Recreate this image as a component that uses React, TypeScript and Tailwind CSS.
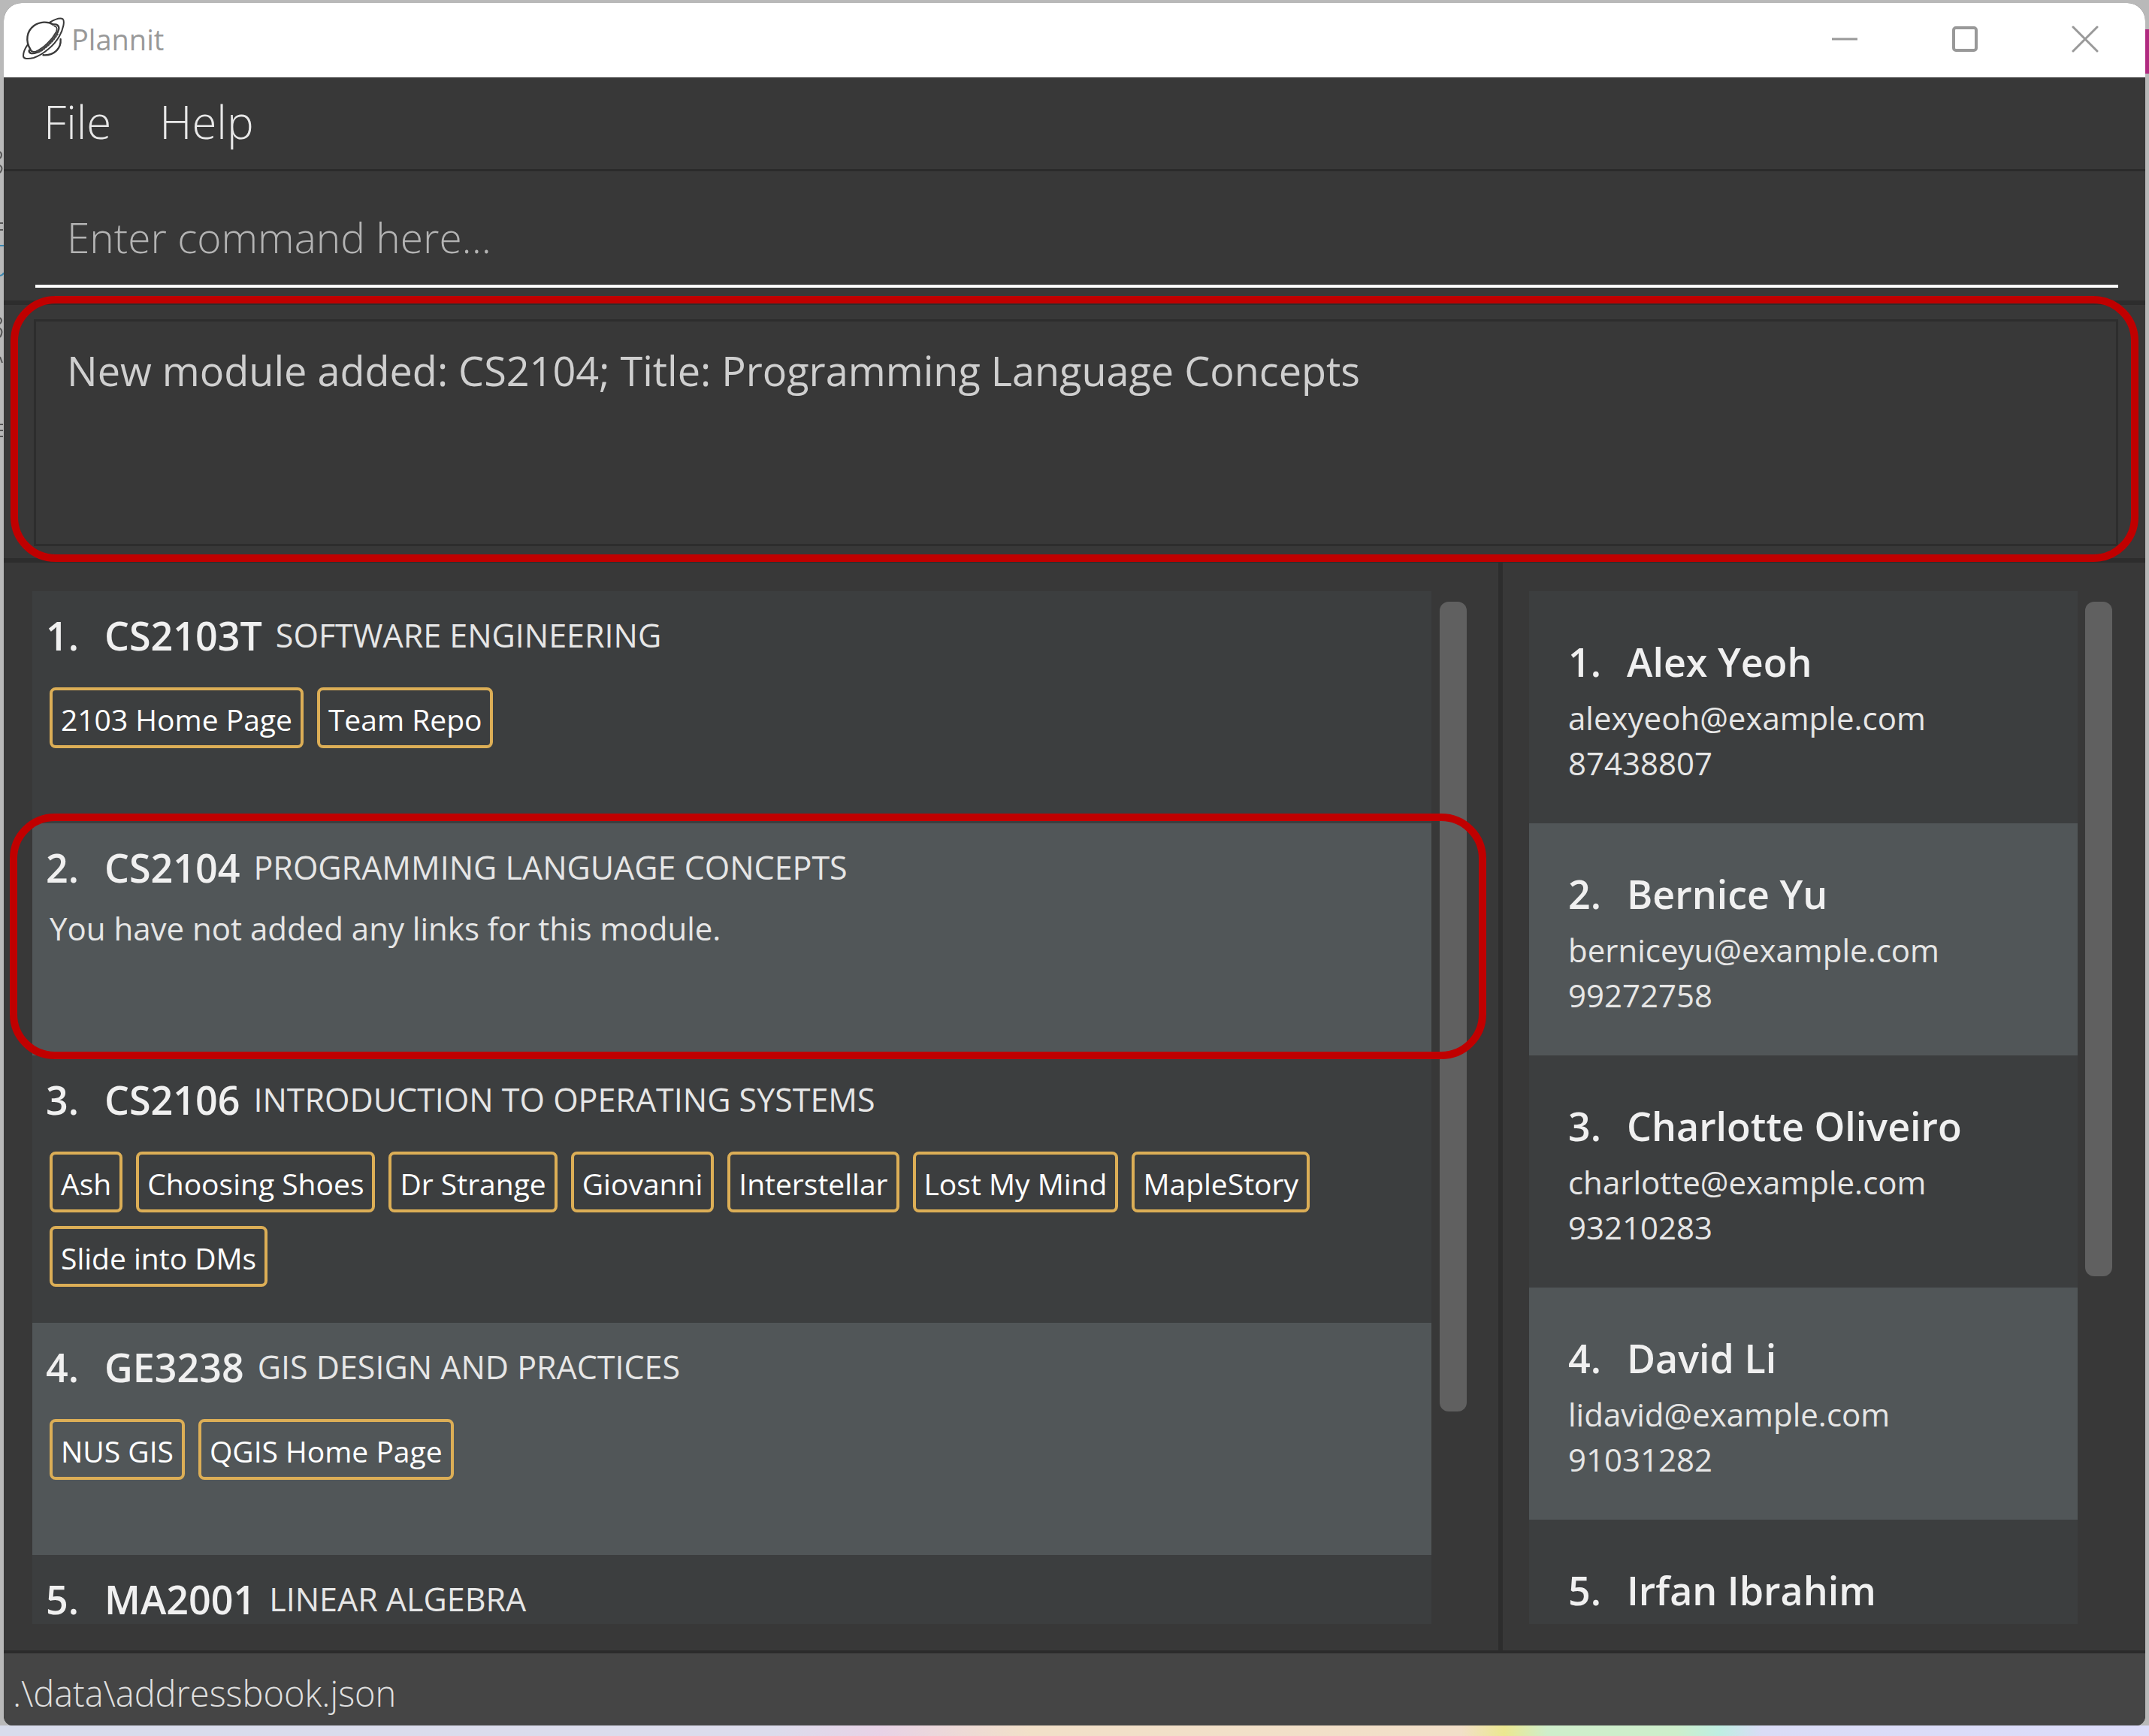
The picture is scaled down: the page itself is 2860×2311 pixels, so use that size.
type Module = { code: string; title: string; links?: string[]; note?: string; highlighted?: boolean };
type Contact = { name: string; email?: string; phone?: string };

const modules: Module[] = [
  { code: "CS2103T", title: "SOFTWARE ENGINEERING", links: ["2103 Home Page", "Team Repo"] },
  {
    code: "CS2104",
    title: "PROGRAMMING LANGUAGE CONCEPTS",
    note: "You have not added any links for this module.",
    highlighted: true,
  },
  {
    code: "CS2106",
    title: "INTRODUCTION TO OPERATING SYSTEMS",
    links: ["Ash", "Choosing Shoes", "Dr Strange", "Giovanni", "Interstellar", "Lost My Mind", "MapleStory", "Slide into DMs"],
  },
  { code: "GE3238", title: "GIS DESIGN AND PRACTICES", links: ["NUS GIS", "QGIS Home Page"] },
  { code: "MA2001", title: "LINEAR ALGEBRA" },
];

const contacts: Contact[] = [
  { name: "Alex Yeoh", email: "alexyeoh@example.com", phone: "87438807" },
  { name: "Bernice Yu", email: "berniceyu@example.com", phone: "99272758" },
  { name: "Charlotte Oliveiro", email: "charlotte@example.com", phone: "93210283" },
  { name: "David Li", email: "lidavid@example.com", phone: "91031282" },
  { name: "Irfan Ibrahim" },
];

function PlanetLogo() {
  return (
    <svg viewBox="24 34 176 176" className="size-[59px]" fill="none" stroke="#3a3a3a" strokeWidth="7" strokeLinecap="round" aria-hidden="true">
      <path d="M62 166 C40 132 46 92 76 70 C98 54 130 52 152 66" />
      <path d="M181 124 C184 158 158 190 112 187" />
      <path d="M136 58 C160 44 180 38 190 44 C198 52 192 84 176 112 C156 148 112 186 74 198 C50 204 32 202 33 190 C33 176 40 160 50 146" strokeWidth="6" />
      <path d="M150 66 C166 62 176 70 174 84 C166 116 122 162 88 176 C70 184 54 182 56 168" />
      <path d="M156 72 C168 74 168 84 164 94 C146 128 112 160 84 172 C72 176 64 174 60 164" strokeWidth="5" />
      <path d="M168 100 C148 134 118 160 88 176" stroke="#4a4a4a" strokeWidth="12" strokeDasharray="9 2" strokeLinecap="butt" />
    </svg>
  );
}

function TitleBar() {
  const button = "flex h-full w-40 items-center justify-center";
  return (
    <header className="flex h-[99px] shrink-0 items-center bg-white pb-1 pl-[23px]">
      <PlanetLogo />
      <h1 className="ml-2 flex-1 text-[38px] leading-[52px] text-[#999999]">Plannit</h1>
      <button className={button} aria-label="Minimize">
        <svg viewBox="0 0 36 36" className="size-9" stroke="#999999" strokeWidth="3" aria-hidden="true">
          <path d="M1 18H35" />
        </svg>
      </button>
      <button className={button} aria-label="Maximize">
        <svg viewBox="0 0 36 36" className="size-9" fill="none" stroke="#999999" strokeWidth="4" aria-hidden="true">
          <rect x="3" y="3" width="30" height="30" rx="3" />
        </svg>
      </button>
      <button className={button} aria-label="Close">
        <svg viewBox="0 0 36 36" className="size-9" stroke="#999999" strokeWidth="3" strokeLinecap="round" aria-hidden="true">
          <path d="M2 2L34 34M34 2L2 34" />
        </svg>
      </button>
    </header>
  );
}

function Heading({ index, children }: { index: number; children: string }) {
  return (
    <h2 className="flex text-[52px] leading-[70px] font-semibold text-[#f0f0f0]">
      <span className="w-[78px]">{index}.</span>
      {children}
    </h2>
  );
}

function Highlight({ className }: { className: string }) {
  return <div className={"pointer-events-none absolute z-10 rounded-[60px] border-[10px] border-[#c00000] " + className} />;
}

function ModuleRow({ module, index }: { module: Module; index: number }) {
  return (
    <li className="relative min-h-[309px] shrink-0 pt-6 pr-8 pb-12 pl-[18px] odd:bg-[#3c3e3f] even:bg-[#515658]">
      <div className="flex items-center gap-[18px]">
        <Heading index={index}>{module.code}</Heading>
        <p className="text-[43px] leading-[60px] text-[#e6e6e6]">{module.title}</p>
      </div>
      {module.links && (
        <div className="mt-[34px] ml-[5px] flex flex-wrap gap-[18px]">
          {module.links.map((link) => (
            <a key={link} href="#" className="flex h-[81px] items-center rounded-lg border-4 border-[#dcae56] px-[11px] pt-1 text-[39px] leading-[54px] text-white">
              {link}
            </a>
          ))}
        </div>
      )}
      {module.note && <p className="mt-4 ml-[5px] text-[42px] leading-[60px] text-[#e6e6e6]">{module.note}</p>}
      {module.highlighted && <Highlight className="-top-[13px] -right-[73px] -bottom-[5px] -left-[30px]" />}
    </li>
  );
}

function ContactRow({ contact, index }: { contact: Contact; index: number }) {
  return (
    <li className="h-[309px] shrink-0 pt-[59px] pl-[52px] odd:bg-[#3c3e3f] even:bg-[#515658]">
      <Heading index={index}>{contact.name}</Heading>
      {contact.email && <p className="mt-2.5 text-[42px] leading-[60px] text-[#e6e6e6]">{contact.email}</p>}
      {contact.phone && <p className="text-[42px] leading-[60px] text-[#e6e6e6]">{contact.phone}</p>}
    </li>
  );
}

function ScrollBar({ thumb }: { thumb: string }) {
  return (
    <div className="w-9 shrink-0 py-3.5">
      <div className={"rounded-xl bg-[#606060] " + thumb} />
    </div>
  );
}

function EdgeMarks({ className }: { className: string }) {
  return (
    <svg viewBox="0 0 5 600" preserveAspectRatio="none" className={"absolute h-[600px] w-[5px] " + className} fill="none" aria-hidden="true">
      <path d="M0 137q4 4 0 9M0 155q5 4 0 10M0 232h4M0 241h4M0 358q4 4 0 8M0 372q5 4 0 12M0 410l3 8M0 500h4M0 508h4M0 516h4" stroke="#555555" strokeWidth="2" />
      <path d="M0 262h5M0 302q4 -1 5 -4" stroke="#3b87b0" strokeWidth="2" />
    </svg>
  );
}

export default function App() {
  return (
    <div className="relative flex h-screen flex-col bg-[#b9b9b9] font-['Open_Sans','Noto_Sans',sans-serif]">
      <EdgeMarks className="top-[65px] left-0" />
      <div className="absolute top-[39px] right-0 h-[59px] w-5 bg-[#b02a80]" />
      <main className="relative mx-[5px] mt-1 flex min-h-0 flex-1 flex-col overflow-hidden rounded-t-[24px] rounded-b-[12px] bg-[#383838]">
        <TitleBar />

        <nav className="flex h-[125px] shrink-0 items-center gap-16 border-b-[3px] border-[#2b2b2b] pb-1 pl-[53px] text-[60px] leading-[84px] font-light text-[#e8e8e8]">
          <button>File</button>
          <button>Help</button>
        </nav>

        <section className="shrink-0 border-b-[6px] border-[#2d2d2d] pt-[23px] pr-9 pb-[17px] pl-[42px]">
          <input
            type="text"
            aria-label="Command"
            placeholder="Enter command here..."
            className="block h-[132px] w-full border-b-4 border-white bg-transparent pl-[42px] text-[55px] leading-[76px] font-light text-white outline-none placeholder:text-[#b4b4b4] placeholder:opacity-100"
          />
        </section>

        <section className="relative shrink-0 border-b-[6px] border-[#2d2d2d] pt-[19px] pr-9 pb-4 pl-10">
          <output className="block h-[302px] border-[3px] border-[#2d2d2d] pt-[29px] pl-[41px] text-[54px] leading-[72px] text-[#cfcfcf]">
            New module added: CS2104; Title: Programming Language Concepts
          </output>
          <Highlight className="-top-3 right-[9px] -bottom-[5px] left-[9px]" />
        </section>

        <div className="flex min-h-0 flex-1">
          <section className="flex w-[70%] border-r-[6px] border-[#2d2d2d] pt-[38px] pr-[42px] pb-[35px] pl-[38px]" aria-label="Modules">
            <ol className="mr-[11px] flex min-w-0 flex-1 flex-col overflow-x-visible overflow-y-clip">
              {modules.map((module, i) => (
                <ModuleRow key={module.code} module={module} index={i + 1} />
              ))}
            </ol>
            <ScrollBar thumb="h-[80%]" />
          </section>
          <section className="flex w-[30%] pt-[38px] pr-[44px] pb-[35px] pl-[35px]" aria-label="Contacts">
            <ol className="mr-2.5 flex min-w-0 flex-1 flex-col overflow-hidden">
              {contacts.map((contact, i) => (
                <ContactRow key={contact.name} contact={contact} index={i + 1} />
              ))}
            </ol>
            <ScrollBar thumb="h-2/3" />
          </section>
        </div>

        <footer className="flex h-[100px] shrink-0 items-center border-t-4 border-[#2b2b2b] bg-[#454545] pt-2.5 pl-3 text-[47px] leading-[64px] font-light text-[#e0e0e0]">
          .\data\addressbook.json
        </footer>
      </main>
      <div className="h-3.5 shrink-0 bg-linear-[90deg,#d8dcec_0%,#dcdcec_36%,#e8d2e6_41%,#f2e0c8_48%,#f2dfc8_68%,#ece890_70%,#cfeecb_72%,#cdeecb_78%,#bfeee2_80%,#dadcf6_82%,#dcdcfa_100%]" />
    </div>
  );
}
